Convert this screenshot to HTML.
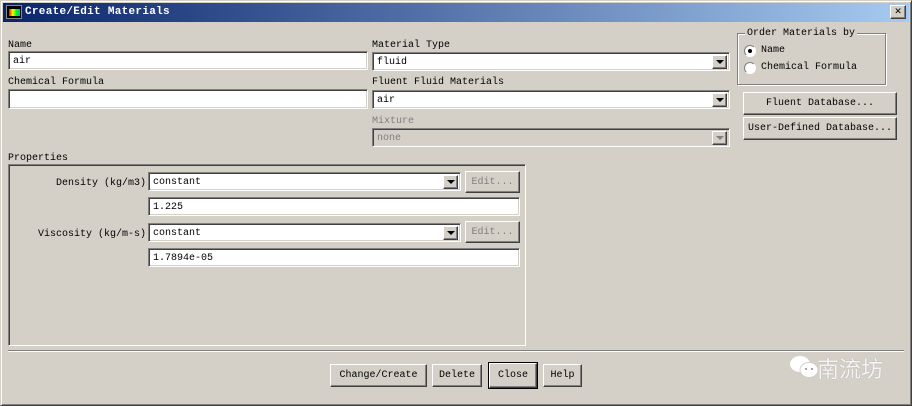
<!DOCTYPE html>
<html><head><style>
*{box-sizing:border-box;margin:0;padding:0}
body{width:912px;height:406px;background:#d4d0c8;font:10px "Liberation Mono",monospace;color:#000;position:relative;overflow:hidden}
.win{position:absolute;left:0;top:0;width:912px;height:406px;border:1px solid;border-color:#d4d0c8 #404040 #404040 #d4d0c8;box-shadow:inset 1px 1px #fff,inset -1px -1px #808080}
.title{position:absolute;left:3px;top:3px;width:906px;height:19px;background:linear-gradient(90deg,#0a246a,#a6caf0);color:#fff;font-weight:bold;font-size:11px;line-height:19px;padding-left:22px;letter-spacing:.3px}
.a{position:absolute}
.lbl{position:absolute;font-size:10px;line-height:12px;white-space:nowrap;margin-top:2px}
.inp{position:absolute;background:#fff;border:1px solid;border-color:#808080 #fff #fff #808080;box-shadow:inset 1px 1px #404040,inset -1px -1px #d4d0c8;padding:4px 0 0 4px;font-size:10px;line-height:12px}
.dis{background:#d4d0c8;color:#808080}
.arr{position:absolute;right:2px;top:2px;width:15px;height:14px;background:#d4d0c8;border:1px solid;border-color:#fff #404040 #404040 #fff;box-shadow:inset -1px -1px #808080}
.arr:after{content:"";position:absolute;left:3px;top:4px;border:4px solid transparent;border-top:4px solid #000;border-bottom:0}
.dis .arr:after{border-top-color:#808080}
.btn{position:absolute;background:#d4d0c8;border:1px solid;border-color:#fff #404040 #404040 #fff;box-shadow:inset -1px -1px #808080;text-align:center;font-size:10px;padding-top:1px}
.grp{position:absolute;border:1px solid #808080;box-shadow:1px 1px #fff,inset 1px 1px #fff}
.rad{position:absolute;width:12px;height:12px;border-radius:50%;background:#fff;border:1px solid;border-color:#808080 #fff #fff #808080}
</style></head><body>
<div class="win"></div>
<div class="title">Create/Edit Materials</div>
<div class="a" style="left:6px;top:5px;width:16px;height:14px;background:#000;border:1px solid #888"><div style="position:absolute;left:2px;top:3px;width:11px;height:7px;background:linear-gradient(90deg,#f00,#ff0,#0f0,#0af)"></div></div>
<div class="btn" style="left:890px;top:5px;width:16px;height:14px;line-height:12px;font-weight:bold;font-size:11px;padding:0">✕</div>

<div class="lbl" style="left:8px;top:38px">Name</div>
<div class="inp" style="left:8px;top:51px;width:360px;height:19px">air</div>
<div class="lbl" style="left:8px;top:75px">Chemical Formula</div>
<div class="inp" style="left:8px;top:89px;width:360px;height:20px"></div>

<div class="lbl" style="left:372px;top:38px">Material Type</div>
<div class="inp" style="left:372px;top:52px;width:358px;height:19px">fluid<div class="arr"></div></div>
<div class="lbl" style="left:372px;top:75px">Fluent Fluid Materials</div>
<div class="inp" style="left:372px;top:90px;width:358px;height:19px">air<div class="arr"></div></div>
<div class="lbl" style="left:372px;top:114px;color:#808080">Mixture</div>
<div class="inp dis" style="left:372px;top:128px;width:358px;height:19px">none<div class="arr"></div></div>

<div class="grp" style="left:737px;top:33px;width:149px;height:52px"></div>
<div class="lbl" style="left:745px;top:26px;background:#d4d0c8;padding:0 2px">Order Materials by</div>
<div class="rad" style="left:744px;top:45px"><div style="position:absolute;left:3px;top:3px;width:4px;height:4px;background:#000;border-radius:50%"></div></div>
<div class="lbl" style="left:761px;top:43px">Name</div>
<div class="rad" style="left:744px;top:62px"></div>
<div class="lbl" style="left:761px;top:60px">Chemical Formula</div>
<div class="btn" style="left:743px;top:92px;width:154px;height:23px;line-height:20px">Fluent Database...</div>
<div class="btn" style="left:743px;top:117px;width:154px;height:23px;line-height:20px">User-Defined Database...</div>

<div class="lbl" style="left:8px;top:151px">Properties</div>
<div class="a" style="left:8px;top:164px;width:518px;height:182px;border:1px solid;border-color:#808080 #fff #fff #808080;box-shadow:inset 1px 1px #404040"></div>
<div class="lbl" style="left:0;width:146px;text-align:right;top:176px">Density (kg/m3)</div>
<div class="inp" style="left:148px;top:172px;width:313px;height:19px">constant<div class="arr"></div></div>
<div class="btn" style="left:465px;top:171px;width:55px;height:22px;line-height:20px;color:#808080">Edit...</div>
<div class="inp" style="left:148px;top:197px;width:372px;height:19px">1.225</div>
<div class="lbl" style="left:0;width:146px;text-align:right;top:227px">Viscosity (kg/m-s)</div>
<div class="inp" style="left:148px;top:223px;width:313px;height:19px">constant<div class="arr"></div></div>
<div class="btn" style="left:465px;top:221px;width:55px;height:22px;line-height:20px;color:#808080">Edit...</div>
<div class="inp" style="left:148px;top:248px;width:372px;height:19px">1.7894e-05</div>

<div class="a" style="left:8px;top:350px;width:896px;height:2px;border-top:1px solid #808080;border-bottom:1px solid #fff"></div>

<div class="btn" style="left:330px;top:364px;width:97px;height:23px;line-height:20px">Change/Create</div>
<div class="btn" style="left:432px;top:364px;width:50px;height:23px;line-height:20px">Delete</div>
<div class="btn" style="left:489px;top:363px;width:48px;height:25px;line-height:22px;outline:1px solid #000">Close</div>
<div class="btn" style="left:543px;top:364px;width:39px;height:23px;line-height:20px">Help</div>

<svg class="a" style="left:788px;top:353px" width="34" height="30"><ellipse cx="12" cy="11" rx="10" ry="8" fill="#fff"/><ellipse cx="21" cy="17" rx="9" ry="7.5" fill="#fff" stroke="#d4d0c8"/><circle cx="18" cy="16" r="1" fill="#888"/><circle cx="24" cy="16" r="1" fill="#888"/></svg>
<div class="lbl" style="left:817px;top:353px;color:#f4f4f4;font:22px 'Noto Sans CJK SC',sans-serif;line-height:26px;text-shadow:0 0 1px #999">南流坊</div>
</body></html>
